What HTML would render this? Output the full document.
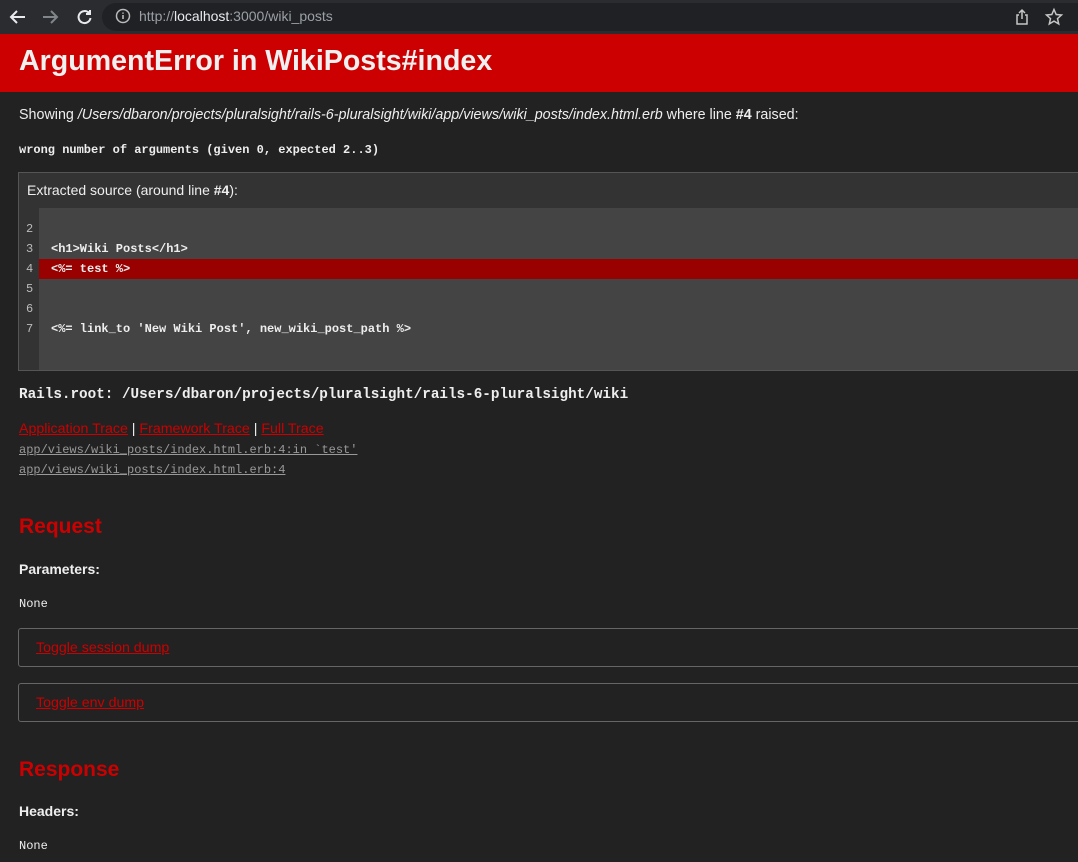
<!DOCTYPE html>
<html><head><meta charset="utf-8"><style>
*{margin:0;padding:0;box-sizing:border-box}
body{width:1078px;height:862px;overflow:hidden;background:#222;font-family:"Liberation Sans",sans-serif;color:#eee;position:relative}
.a{position:absolute;white-space:nowrap}
.m{font-family:"Liberation Mono",monospace;font-weight:bold}
.red{color:#c00}
</style></head><body>
<div class="a" style="left:0;top:0;width:1078px;height:34px;background:#2b2c2f"></div>
<div class="a" style="left:102px;top:3px;width:990px;height:28px;border-radius:14px;background:#202124"></div>
<svg class="a" style="left:8px;top:7px" width="90" height="20" viewBox="0 0 90 20" fill="none" stroke-width="2">
<path d="M17 10H4M9 4L3 10l6 6" stroke="#e8eaed"/>
<path d="M35 10h13M43 4l6 6-6 6" stroke="#80868b"/>
<path d="M81 6a6 6 0 1 0 1.5 5" stroke="#e8eaed"/><path d="M82 3v4h-4" stroke="#e8eaed" fill="#e8eaed"/>
</svg>
<svg class="a" style="left:115px;top:8px" width="16" height="16" viewBox="0 0 16 16"><circle cx="8" cy="8" r="6.5" fill="none" stroke="#bbb" stroke-width="1.5"/><path d="M8 7v4M8 4.5v1.3" stroke="#bbb" stroke-width="1.6"/></svg>
<div class="a" style="left:139px;top:8px;font-size:14px;color:#9aa0a6">http://<span style="color:#e8eaed">localhost</span>:3000/wiki_posts</div>
<svg class="a" style="left:1014px;top:7px" width="56" height="20" viewBox="0 0 56 20" fill="none" stroke="#c4c7c5" stroke-width="1.5">
<path d="M5 8H3v9h10V8h-2M8 12V3M5 6l3-3 3 3"/>
<path d="M40 2.5l2.2 5 5.3.5-4 3.6 1.2 5.3-4.7-2.8-4.7 2.8 1.2-5.3-4-3.6 5.3-.5z"/>
</svg>
<div class="a" style="left:0;top:34px;width:1078px;height:58px;background:#c00"></div>
<div class="a" style="left:19px;top:45px;font-size:28.6px;font-weight:bold;color:#f0f0f0">ArgumentError in WikiPosts#index</div>
<div class="a" style="left:19px;top:107px;font-size:14.3px">Showing <i>/Users/dbaron/projects/pluralsight/rails-6-pluralsight/wiki/app/views/wiki_posts/index.html.erb</i> where line <b>#4</b> raised:</div>
<div class="a m" style="left:19px;top:143px;font-size:12px">wrong number of arguments (given 0, expected 2..3)</div>
<div class="a" style="left:18px;top:172px;width:1070px;height:199px;background:#333;border:1px solid #555"></div>
<div class="a" style="left:27px;top:182px;font-size:14px">Extracted source (around line <b>#4</b>):</div>
<div class="a" style="left:39px;top:208px;width:1050px;height:162px;background:#444"></div>
<div class="a" style="left:39px;top:259px;width:1050px;height:20px;background:#900"></div>
<div class="a m" style="left:26px;top:219px;font-size:12px;line-height:20px;color:#bbb;font-weight:normal">2<br>3<br>4<br>5<br>6<br>7</div>
<div class="a m" style="left:51px;top:219px;font-size:12px;line-height:20px;color:#eee"><br>&lt;h1&gt;Wiki Posts&lt;/h1&gt;<br>&lt;%= test %&gt;<br><br><br>&lt;%= link_to 'New Wiki Post', new_wiki_post_path %&gt;</div>
<div class="a m" style="left:19px;top:387px;font-size:14.3px">Rails.root: /Users/dbaron/projects/pluralsight/rails-6-pluralsight/wiki</div>
<div class="a" style="left:19px;top:421px;font-size:14.2px"><u class="red">Application Trace</u> | <u class="red">Framework Trace</u> | <u class="red">Full Trace</u></div>
<div class="a m" style="left:19px;top:443px;font-size:12px;color:#999;text-decoration:underline;font-weight:normal">app/views/wiki_posts/index.html.erb:4:in `test'</div>
<div class="a m" style="left:19px;top:463px;font-size:12px;color:#999;text-decoration:underline;font-weight:normal">app/views/wiki_posts/index.html.erb:4</div>
<div class="a red" style="left:19px;top:515px;font-size:21px;font-weight:bold">Request</div>
<div class="a" style="left:19px;top:561px;font-size:14px;font-weight:bold">Parameters:</div>
<div class="a m" style="left:19px;top:597px;font-size:12px;font-weight:normal">None</div>
<div class="a" style="left:18px;top:628px;width:1080px;height:39px;border:1px solid #666;border-radius:3px"></div>
<div class="a" style="left:36px;top:640px;font-size:14.2px"><u class="red">Toggle session dump</u></div>
<div class="a" style="left:18px;top:683px;width:1080px;height:39px;border:1px solid #666;border-radius:3px"></div>
<div class="a" style="left:36px;top:695px;font-size:14.2px"><u class="red">Toggle env dump</u></div>
<div class="a red" style="left:19px;top:758px;font-size:21px;font-weight:bold">Response</div>
<div class="a" style="left:19px;top:803px;font-size:14px;font-weight:bold">Headers:</div>
<div class="a m" style="left:19px;top:839px;font-size:12px;font-weight:normal">None</div>
</body></html>
